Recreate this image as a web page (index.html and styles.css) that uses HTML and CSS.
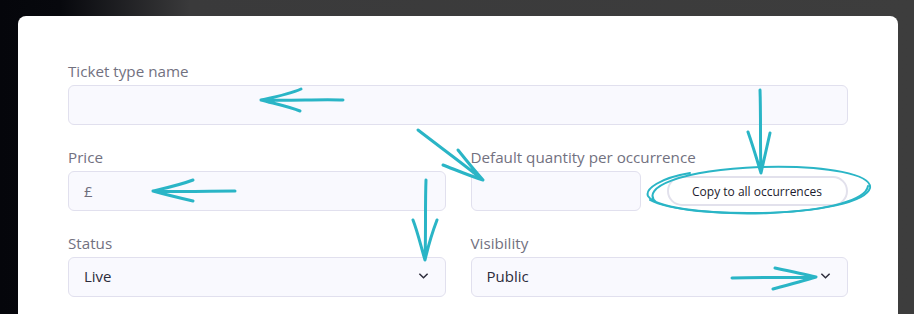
FILE: index.html
```html
<!DOCTYPE html>
<html lang="en">
  <head>
    <meta charset="UTF-8" />
    <meta name="viewport" content="width=device-width, initial-scale=1.0" />
    <title>Ticket type</title>
    <link rel="stylesheet" href="styles.css">
  </head>
  <body>
    <div class="modal">
      <form class="ticket-form">
        <div class="form-group full">
          <label for="ticketName">Ticket type name</label>
          <input type="text" id="ticketName" />
        </div>

        <div class="form-group">
          <label for="price">Price</label>
          <div class="price-input">
            <span class="currency">£</span>
            <input type="text" id="price" />
          </div>
        </div>

        <div class="form-group">
          <label for="quantity">Default quantity per occurrence</label>
          <div class="quantity-row">
            <input type="text" id="quantity" class="quantity-input" />
            <button type="button" class="copy-button">Copy to all occurrences</button>
          </div>
        </div>

        <div class="form-group">
          <label for="status">Status</label>
          <div class="select-box" id="status">
            <span>Live</span>
            <svg class="chevron" viewBox="0 0 12 8"><path d="M1.5 1.5 6 6l4.5-4.5" /></svg>
          </div>
        </div>

        <div class="form-group">
          <label for="visibility">Visibility</label>
          <div class="select-box" id="visibility">
            <span>Public</span>
            <svg class="chevron" viewBox="0 0 12 8"><path d="M1.5 1.5 6 6l4.5-4.5" /></svg>
          </div>
        </div>
      </form>
    </div>

    <!-- hand drawn annotations on top of the screenshot -->
    <svg class="annotations" viewBox="0 0 914 314">
      <path d="M343 100 C320 99 290 101 261 100 M301 89 C290 94 275 97 261 100 C276 104 290 107 300 111" />
      <path d="M235 191 C210 191 180 192 153 191 M193 180 C180 185 166 188 153 191 C167 195 180 198 193 201" />
      <path d="M418 130 C440 147 462 163 483 180 M458 150 C466 160 474 170 483 180 C470 176 456 170 443 165" />
      <path d="M426 180 C425 205 426 232 425 260 M413 220 C418 233 421 247 425 260 C428 247 432 233 437 220" />
      <path d="M760 90 C761 118 760 145 761 173 M748 132 C753 146 757 160 761 173 C764 160 767 146 770 133" />
      <path d="M732 278 C760 277 790 278 816 277 M775 268 C789 271 803 274 816 277 C803 281 788 285 773 289" />
      <path class="thin" d="M656 202 C640 188 680 170 760 167 C830 165 872 175 870 188 C866 202 820 212 760 213 C700 214 655 207 648 196 C645 189 660 178 690 173" />
      <path class="thin" d="M650 200 C668 210 720 215 770 213 C830 210 866 200 868 186" />
    </svg>
  </body>
</html>
```

FILE: styles.css
```css
body {
  margin: 0;
  padding: 16px 16px 0 18px;
  height: 314px;
  box-sizing: border-box;
  overflow: hidden;
  font-family: "Open Sans", "Noto Sans", sans-serif;
  background: linear-gradient(90deg, #05060b 0, #07080d 60px, #3a3a3b 190px, #3d3d3d 100%);
}

.modal {
  background: white;
  border-radius: 8px 8px 0 0;
  height: 100%;
  padding: 45px 50px 0 50px;
  box-sizing: border-box;
}

.ticket-form {
  display: grid;
  grid-template-columns: 1fr 1fr;
  column-gap: 25px;
  row-gap: 22px;
}

.form-group.full {
  grid-column: 1 / 3;
}

.form-group label {
  display: block;
  font-size: 15.2px;
  line-height: 20px;
  color: #72717f;
  margin-bottom: 4px;
}

.form-group input,
.price-input,
.select-box {
  width: 100%;
  height: 40px;
  box-sizing: border-box;
  border: 1px solid #e1e0ee;
  border-radius: 6px;
  background: #f9f9fe;
  font-family: inherit;
  font-size: 15px;
  color: #2d2c3b;
  display: block;
}

.price-input {
  display: flex;
  align-items: center;
  padding-left: 15px;
}

.price-input .currency {
  color: #6f6e7c;
  font-size: 15px;
}

.price-input input {
  border: none;
  background: transparent;
  height: 38px;
}

.quantity-row {
  display: flex;
  align-items: center;
  gap: 26px;
}

.quantity-row .quantity-input {
  width: 170px;
  flex: none;
}

.copy-button {
  width: 181px;
  height: 30px;
  border: 2px solid #e2e1ec;
  border-radius: 15px;
  background: white;
  font-family: inherit;
  font-size: 12px;
  color: #1c1b2e;
  cursor: pointer;
}

.select-box {
  display: flex;
  align-items: center;
  justify-content: space-between;
  padding: 0 16px 2px 15px;
}

.chevron {
  width: 11px;
  height: 8px;
  fill: none;
  stroke: #2d2c3b;
  stroke-width: 1.6;
}

.annotations {
  position: absolute;
  top: 0;
  left: 0;
  width: 914px;
  height: 314px;
  pointer-events: none;
  fill: none;
  stroke: #2ab5c6;
  stroke-width: 3;
  stroke-linecap: round;
  stroke-linejoin: round;
}

.annotations .thin {
  stroke-width: 2;
}
```
